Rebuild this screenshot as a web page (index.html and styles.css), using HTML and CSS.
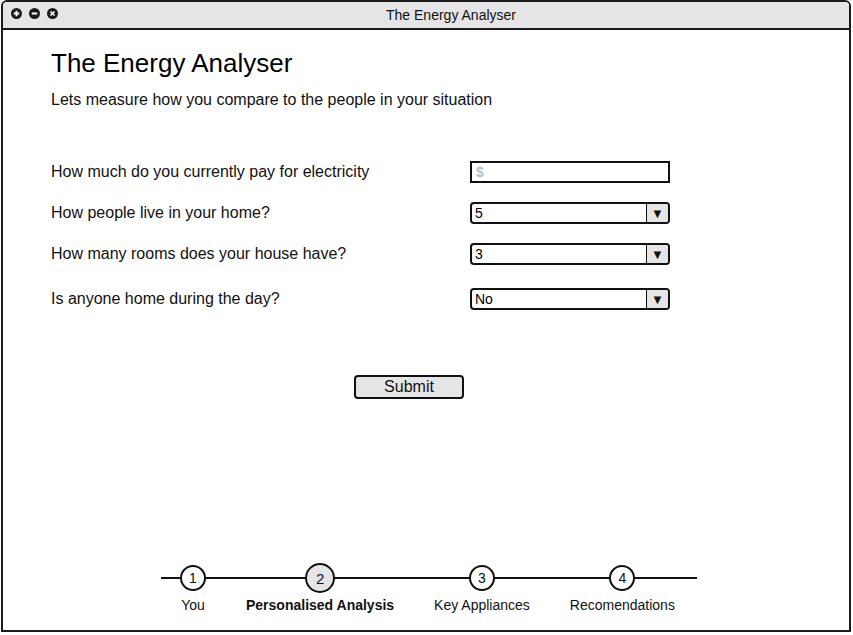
FILE: index.html
```html
<!DOCTYPE html>
<html lang="en">
<head>
<meta charset="utf-8">
<title>The Energy Analyser</title>
<link rel="stylesheet" href="styles.css">
</head>
<body>
<div class="window">
  <div class="titlebar">
    <div class="controls">
      <svg class="ctl" viewBox="0 0 12 12"><circle cx="6" cy="6" r="6" fill="#1a1a1a"/><path d="M6 3V9M3 6H9" stroke="#fff" stroke-width="2"/></svg>
      <svg class="ctl" viewBox="0 0 12 12"><circle cx="6" cy="6" r="6" fill="#1a1a1a"/><path d="M3 6H9" stroke="#fff" stroke-width="2.2"/></svg>
      <svg class="ctl" viewBox="0 0 12 12"><circle cx="6" cy="6" r="6" fill="#1a1a1a"/><path d="M3.8 3.8L8.2 8.2M8.2 3.8L3.8 8.2" stroke="#fff" stroke-width="1.8"/></svg>
    </div>
    <div class="title">The Energy Analyser</div>
  </div>
  <div class="content">
    <h1 class="heading">The Energy Analyser</h1>
    <p class="subtitle">Lets measure how you compare to the people in your situation</p>

    <div class="form">
      <div class="row">
        <label class="label">How much do you currently pay for electricity</label>
        <div class="textbox"><span class="placeholder">$</span></div>
      </div>
      <div class="row">
        <label class="label">How people live in your home?</label>
        <div class="select"><span class="value">5</span><span class="arrow">&#9660;</span></div>
      </div>
      <div class="row">
        <label class="label">How many rooms does your house have?</label>
        <div class="select"><span class="value">3</span><span class="arrow">&#9660;</span></div>
      </div>
      <div class="row row-last">
        <label class="label">Is anyone home during the day?</label>
        <div class="select"><span class="value">No</span><span class="arrow">&#9660;</span></div>
      </div>
    </div>

    <div class="actions">
      <button class="submit">Submit</button>
    </div>

    <div class="stepper">
      <div class="step">
        <div class="dotwrap"><div class="dot">1</div></div>
        <div class="steplabel">You</div>
      </div>
      <div class="step">
        <div class="dotwrap"><div class="dot active">2</div></div>
        <div class="steplabel bold">Personalised Analysis</div>
      </div>
      <div class="step">
        <div class="dotwrap"><div class="dot">3</div></div>
        <div class="steplabel">Key Appliances</div>
      </div>
      <div class="step">
        <div class="dotwrap"><div class="dot">4</div></div>
        <div class="steplabel">Recomendations</div>
      </div>
    </div>
  </div>
</div>
</body>
</html>
```

FILE: styles.css
```css
* { box-sizing: border-box; }
html, body { margin: 0; padding: 0; background: #fff; }
body {
  font-family: "Liberation Sans", Arial, sans-serif;
  color: #111;
}
.window {
  margin-left: 1px;
  width: 850px;
  height: 632px;
  border: 2px solid #1c1c1c;
  border-radius: 6px 6px 0 0;
  display: flex;
  flex-direction: column;
  overflow: hidden;
}
.titlebar {
  position: relative;
  height: 28px;
  flex: none;
  background: #e5e5e5;
  border-bottom: 2px solid #1c1c1c;
  display: flex;
  align-items: center;
  justify-content: center;
}
.controls {
  position: absolute;
  left: 8px;
  top: 6px;
  display: flex;
  gap: 7px;
}
.ctl { width: 11px; height: 11px; display: block; }
.title {
  font-size: 14px;
  color: #111;
  margin-left: 50px;
}
.content {
  flex: 1;
  display: flex;
  flex-direction: column;
  padding: 0 0 0 48px;
}
.heading {
  margin: 18px 0 0;
  font-size: 26px;
  line-height: 30px;
  font-weight: normal;
  color: #000;
}
.subtitle {
  margin: 12px 0 0;
  font-size: 16px;
  line-height: 20px;
}
.form {
  margin-top: 51px;
  display: flex;
  flex-direction: column;
  gap: 19px;
}
.row {
  display: grid;
  grid-template-columns: 419px 200px;
  align-items: center;
  height: 22px;
}
.row-last { margin-top: 4px; }
.label {
  font-size: 16px;
  line-height: 18px;
  margin-top: -1px;
}
.textbox {
  height: 22px;
  border: 2px solid #111;
  background: #fff;
  padding-left: 4px;
  display: flex;
  align-items: center;
}
.placeholder {
  color: #bbb;
  font-size: 14px;
  font-weight: bold;
}
.select {
  height: 22px;
  border: 2px solid #111;
  border-radius: 4px;
  background: #fff;
  display: flex;
  align-items: center;
  overflow: hidden;
}
.value {
  flex: 1;
  font-size: 14px;
  padding-left: 3px;
  color: #000;
}
.arrow {
  width: 22px;
  height: 100%;
  background: #e5e5e5;
  border-left: 1px solid #111;
  display: flex;
  align-items: center;
  justify-content: center;
  font-size: 13px;
  color: #111;
}
.actions {
  margin-top: 65px;
  padding-left: 303px;
}
.submit {
  width: 110px;
  height: 24px;
  border: 2px solid #111;
  border-radius: 4px;
  background: #e5e5e5;
  font-family: "Liberation Sans", Arial, sans-serif;
  font-size: 16px;
  color: #111;
  padding: 0;
  line-height: 18px;
}
.stepper {
  position: relative;
  margin-top: auto;
  margin-bottom: 17px;
  margin-left: 110px;
  width: 536px;
  padding: 0 19px;
  display: flex;
  gap: 40px;
}
.stepper::before {
  content: "";
  position: absolute;
  left: 0;
  right: 0;
  top: 14px;
  height: 2px;
  background: #111;
}
.step {
  position: relative;
  display: flex;
  flex-direction: column;
  align-items: center;
}
.dotwrap {
  height: 30px;
  display: flex;
  align-items: center;
}
.dot {
  width: 26px;
  height: 26px;
  border-radius: 50%;
  border: 2px solid #111;
  background: #fff;
  font-size: 14px;
  display: flex;
  align-items: center;
  justify-content: center;
  color: #111;
}
.dot.active {
  width: 30px;
  height: 30px;
  background: #e5e5e5;
  font-size: 15px;
}
.steplabel {
  margin-top: 4px;
  font-size: 14px;
  line-height: 16px;
  white-space: nowrap;
}
.steplabel.bold { font-weight: bold; }
```
